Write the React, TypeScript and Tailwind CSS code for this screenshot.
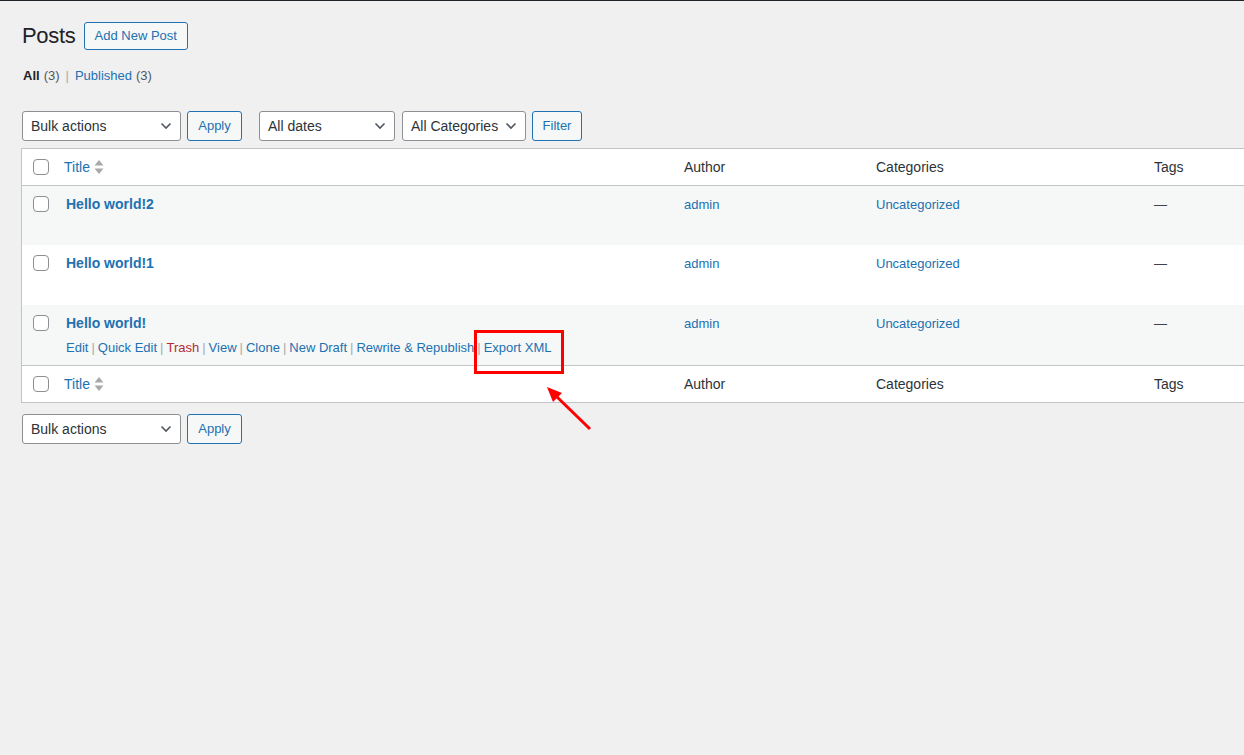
import React from "react"

const font = { fontFamily: '"Liberation Sans", Arial, sans-serif' }

function Chevron() {
  return (
    <svg width="12" height="8" viewBox="0 0 12 8" className="shrink-0">
      <polyline points="1.5,1.5 6,6 10.5,1.5" fill="none" stroke="#50575e" strokeWidth="1.6" />
    </svg>
  )
}

function Select({ label, w }: { label: string; w: string }) {
  return (
    <div className={`${w} h-[30px] flex items-center justify-between pl-[8px] pr-[8px] bg-white border border-[#8c8f94] rounded-[3px] text-[14px] text-[#2c3338]`}>
      <span>{label}</span>
      <Chevron />
    </div>
  )
}

function Button({ label, w }: { label: string; w: string }) {
  return (
    <div className={`${w} h-[30px] flex items-center justify-center bg-[#f6f7f7] border border-[#2271b1] rounded-[3px] text-[13px] text-[#2271b1]`}>
      {label}
    </div>
  )
}

function Checkbox() {
  return <div className="w-[16px] h-[16px] bg-white border border-[#8c8f94] rounded-[4px]" />
}

function SortArrows() {
  return (
    <svg width="10" height="14" viewBox="0 0 10 14" className="ml-[4px]">
      <polygon points="5,0 9.5,5.5 0.5,5.5" fill="#a7aaad" />
      <polygon points="5,14 9.5,8.5 0.5,8.5" fill="#a7aaad" />
    </svg>
  )
}

const cols = "grid grid-cols-[34px_618px_192px_278px_260px]"

function HeadRow({ top }: { top?: boolean }) {
  return (
    <div className={`${cols} h-[37px] items-center bg-white text-[14px] text-[#2c3338] ${top ? "border-b" : "border-t"} border-[#c3c4c7]`}>
      <div className="pl-[11px] flex items-center">
        <Checkbox />
      </div>
      <div className="pl-[8px] flex items-center text-[#2271b1]">
        Title
        <SortArrows />
      </div>
      <div className="pl-[10px]">Author</div>
      <div className="pl-[10px]">Categories</div>
      <div className="pl-[10px]">Tags</div>
    </div>
  )
}

const actions = ["Edit", "Quick Edit", "Trash", "View", "Clone", "New Draft", "Rewrite & Republish", "Export XML"]

function PostRow({ title, striped, showActions, h }: { title: string; striped?: boolean; showActions?: boolean; h: string }) {
  return (
    <div className={`${cols} ${h} ${striped ? "bg-[#f6f7f7]" : "bg-white"} text-[13px] leading-[19px]`}>
      <div className="pl-[11px] pt-[10px]">
        <Checkbox />
      </div>
      <div className="pl-[10px] pt-[9px]">
        <div className="font-bold text-[14px] text-[#2271b1]">{title}</div>
        {showActions && (
          <div className="mt-[5px] flex items-center text-[#2271b1] whitespace-nowrap">
            {actions.map((a, i) => (
              <span key={a} className="flex items-center">
                <span className={a === "Trash" ? "text-[#b32d2e]" : ""}>{a}</span>
                {i < actions.length - 1 && <span className="text-[#a7aaad] px-[3px]">|</span>}
              </span>
            ))}
          </div>
        )}
      </div>
      <div className="pl-[10px] pt-[9px] text-[#2271b1]">admin</div>
      <div className="pl-[10px] pt-[9px] text-[#2271b1]">Uncategorized</div>
      <div className="pl-[10px] pt-[9px] text-[#3c434a]">—</div>
    </div>
  )
}

export default function App() {
  return (
    <div style={font} className="relative w-[1244px] h-[755px] overflow-hidden bg-[#f0f0f1] border-t border-[#1d2327]">
      <div className="pl-[21px]">
        <div className="flex items-center gap-[8px] pt-[21px]">
          <h1 className="pl-[1px] text-[22px] tracking-[-0.3px] text-[#1d2327] leading-[28px]">Posts</h1>
          <div className="h-[28px] px-[10px] flex items-center bg-[#f6f7f7] border border-[#2271b1] rounded-[3px] text-[13px] text-[#2271b1]">
            Add New Post
          </div>
        </div>

        <div className="mt-[13px] h-[26px] pl-[2px] flex items-center text-[13px] text-[#50575e] gap-[4px]">
          <span className="font-semibold text-[#1d2327]">All</span>
          <span>(3)</span>
          <span className="px-[2px] text-[#a7aaad]">|</span>
          <span className="text-[#2271b1]">Published</span>
          <span>(3)</span>
        </div>

        <div className="mt-[22px] flex items-center pl-[1px]">
          <Select label="Bulk actions" w="w-[159px]" />
          <div className="ml-[6px]"><Button label="Apply" w="w-[55px]" /></div>
          <div className="ml-[17px]"><Select label="All dates" w="w-[136px]" /></div>
          <div className="ml-[7px]"><Select label="All Categories" w="w-[124px]" /></div>
          <div className="ml-[6px]"><Button label="Filter" w="w-[50px]" /></div>
        </div>

        <div className="mt-[7px] w-[1400px] border border-[#c3c4c7] bg-white">
          <HeadRow top />
          <PostRow title="Hello world!2" striped h="h-[59px]" />
          <PostRow title="Hello world!1" h="h-[60px]" />
          <PostRow title="Hello world!" striped showActions h="h-[60px]" />
          <HeadRow />
        </div>

        <div className="mt-[11px] flex items-center pl-[1px]">
          <Select label="Bulk actions" w="w-[159px]" />
          <div className="ml-[6px]"><Button label="Apply" w="w-[55px]" /></div>
        </div>
      </div>

      {/* highlight box + arrow */}
      <div className="absolute left-[474px] top-[329px] w-[90px] h-[44px] border-[3px] border-[#ff0000]" />
      <svg className="absolute left-0 top-0" width="1244" height="755">
        <line x1="590" y1="428" x2="556" y2="395" stroke="#ff0000" strokeWidth="3" />
        <polygon points="547,386 562,392 553,401" fill="#ff0000" />
      </svg>
    </div>
  )
}
